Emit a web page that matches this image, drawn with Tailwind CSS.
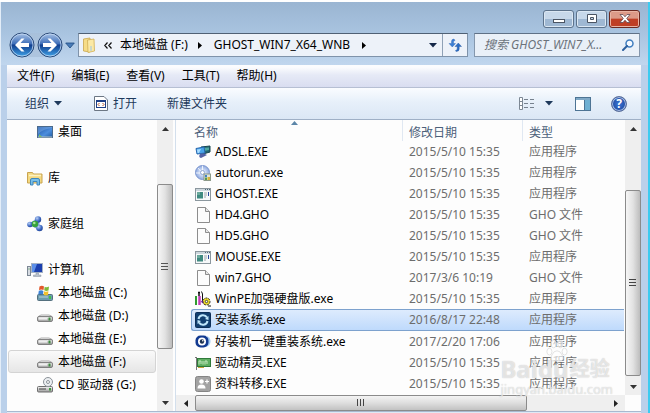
<!DOCTYPE html>
<html lang="zh-CN">
<head>
  <meta charset="UTF-8">
  <meta name="viewport" content="width=device-width, initial-scale=1">
  <title>GHOST_WIN7_X64_WNB</title>
  <script src="https://cdn.jsdelivr.net/npm/@tailwindcss/browser@4"></script>
</head>
<body class="h-screen overflow-hidden bg-white pt-[2px] font-['Noto_Sans','Noto_Sans_CJK_SC',sans-serif] text-xs leading-4 text-black">

  <!-- Shared icons -->
  <svg class="absolute h-0 w-0">
    <defs>
      <linearGradient id="orb" x1="0" y1="0" x2="0" y2="1">
        <stop offset="0" stop-color="#a9c3e6"/><stop offset=".45" stop-color="#3f6fb9"/>
        <stop offset=".5" stop-color="#123f8e"/><stop offset="1" stop-color="#3fa5ea"/>
      </linearGradient>
      <linearGradient id="screen" x1="0" y1="0" x2="1" y2="1">
        <stop offset="0" stop-color="#1c4f9e"/><stop offset=".6" stop-color="#4c8ede"/><stop offset="1" stop-color="#205a9e"/>
      </linearGradient>
      <radialGradient id="ball" cx=".35" cy=".3" r=".8">
        <stop offset="0" stop-color="#b8d0f6"/><stop offset=".6" stop-color="#3b66c0"/><stop offset="1" stop-color="#1d3d8c"/>
      </radialGradient>
      <linearGradient id="metal" x1="0" y1="0" x2="0" y2="1">
        <stop offset="0" stop-color="#f4f4f4"/><stop offset="1" stop-color="#9a9a9a"/>
      </linearGradient>
      <radialGradient id="disc">
        <stop offset="0" stop-color="#ffffff"/><stop offset=".5" stop-color="#c3d3f2"/><stop offset="1" stop-color="#8ea9de"/>
      </radialGradient>
    </defs>
    <symbol id="drive" viewBox="0 0 16 16">
      <path d="M1 9.500Q1 8 4 7H12Q15.500 8 15.500 9.500Z" fill="#f3f3f3" stroke="#9a9a9a" stroke-width=".8"/>
      <rect x=".5" y="8.500" width="15" height="5" rx="1.500" fill="url(#metal)" stroke="#777" stroke-width=".9"/>
      <rect x="2" y="10" width="8" height="1.500" fill="#eee"/>
      <rect x="11.500" y="9.500" width="2" height="3" fill="#3c8a3f"/>
    </symbol>
    <symbol id="program" viewBox="0 0 16 16">
      <rect x=".5" y="2.500" width="15" height="12" fill="#f7f9fa" stroke="#8b979e"/>
      <path d="M1 4H15" stroke="#cdd7dd" stroke-width="2"/>
      <path d="M10 3.500H11M12 3.500H13M14 3.500H15" stroke="#506a7a"/>
      <rect x="2" y="6" width="6" height="6.500" fill="#3f8a80"/>
      <rect x="2" y="6" width="3" height="3" fill="#6ba99c"/>
      <path d="M9 7H12M9 9H12M9 11H11" stroke="#9aa5ab"/>
      <path d="M13.500 6V10" stroke="#26489a"/>
    </symbol>
    <symbol id="page" viewBox="0 0 16 16">
      <path d="M2.500 .5H10.500L14.500 4.500V15.500H2.500Z" fill="#fcfcfc" stroke="#8d8d8d"/>
      <path d="M10.500 .5V4.500H14.500" fill="#e6e6e6" stroke="#8d8d8d"/>
    </symbol>
    <symbol id="down" viewBox="0 0 8 5"><path d="M0 0H8L4 4.500Z" fill="currentColor"/></symbol>
  </svg>

  <div class="flex h-full">
    <div class="flex min-w-0 flex-1 flex-col border-l border-[#e3edf8] bg-[#bad0ea] pl-[6px]">

      <!-- Title bar and address bar -->
      <header class="-ml-[6px] bg-linear-to-b from-[#9ab5d2] via-[#a9c4e0] to-[#c0d6ee] pl-[6px]">
        <div class="flex justify-end gap-[2px] pt-2 pr-2">
          <button aria-label="最小化" class="flex h-[18px] w-[31px] items-center justify-center rounded-[3px] border border-[#5d738c] bg-linear-to-b from-[#c7d8ea] from-50% to-[#9fb8d3] to-50% shadow-[inset_0_0_0_1px_#dbe7f3]">
            <svg class="h-3 w-3" viewBox="0 0 12 12"><rect x=".5" y="6.500" width="11" height="3" fill="#fff" stroke="#4a5463"/></svg>
          </button>
          <button aria-label="最大化" class="flex h-[18px] w-[31px] items-center justify-center rounded-[3px] border border-[#5d738c] bg-linear-to-b from-[#c7d8ea] from-50% to-[#9fb8d3] to-50% shadow-[inset_0_0_0_1px_#dbe7f3]">
            <svg class="h-3 w-3" viewBox="0 0 12 12"><path d="M1.500 1.500H10.500V9.500H1.500ZM4.500 4.500V6.500H7.500V4.500Z" fill="#fff" fill-rule="evenodd" stroke="#4a5463"/></svg>
          </button>
          <button aria-label="关闭" class="flex h-[18px] w-[31px] items-center justify-center rounded-[3px] border border-[#6b2a22] bg-linear-to-b from-[#dc9a88] from-45% to-[#bf3f25] to-50% shadow-[inset_0_0_0_1px_#e8b4a4]">
            <svg class="h-3 w-3" viewBox="0 0 12 12"><path d="M1 1.500H4L6 3.800L8 1.500H11L7.700 5.500L11 9.500H8L6 7.200L4 9.500H1L4.300 5.500Z" fill="#fff" stroke="#5c4a54" stroke-width=".8"/></svg>
          </button>
        </div>

        <div class="flex items-center pt-[5px] pr-2 pb-2 pl-[2px]">
          <div class="flex h-6 items-center rounded-full bg-[#a8bfd8]/70">
            <button aria-label="后退"><svg class="h-[26px] w-[26px]" viewBox="0 0 26 26"><circle cx="13" cy="13" r="12" fill="url(#orb)" stroke="#2b4a78"/><circle cx="13" cy="13" r="11" fill="none" stroke="#c4d9f2" stroke-width=".8"/><path d="M6 13L12.500 6.500H15.500L11.500 11H20V15H11.500L15.500 19.500H12.500Z" fill="#fff"/></svg></button>
            <button aria-label="前进" class="ml-[2px]"><svg class="h-[26px] w-[26px]" viewBox="0 0 26 26"><circle cx="13" cy="13" r="12" fill="url(#orb)" stroke="#2b4a78"/><circle cx="13" cy="13" r="11" fill="none" stroke="#c4d9f2" stroke-width=".8"/><path d="M20 13L13.500 6.500H10.500L14.500 11H6V15H14.500L10.500 19.500H13.500Z" fill="#fff"/></svg></button>
          </div>
          <button aria-label="最近浏览的位置" class="mr-[3px] ml-[2px]"><svg class="h-[7px] w-[10px]" viewBox="0 0 10 7"><path d="M.7 1H9.300L5 6Z" fill="#4a7cb8" stroke="#1d4a80" stroke-width=".8"/></svg></button>

          <div class="flex h-6 min-w-0 flex-1 items-center border border-[#7f93aa] border-t-[#4f6074] bg-[#edf2f9] pl-1">
            <svg class="h-4 w-3 shrink-0" viewBox="0 0 12 16"><path d="M.5 2L7 1V15L.5 14Z" fill="#f6dc86" stroke="#c9a64e" stroke-width=".8"/><path d="M4.500 3L11 2L11.500 14L5 15.500Z" fill="#fbe9a5" stroke="#d0ae55" stroke-width=".8"/><path d="M8 9V14" stroke="#9cc8e8"/></svg>
            <svg class="mr-2 ml-[9px] h-[7px] w-2 shrink-0" viewBox="0 0 8 7"><path d="M3.500 .5L.8 3.500L3.500 6.500M7.500 .5L4.800 3.500L7.500 6.500" fill="none" stroke="#111" stroke-width="1.200"/></svg>
            <a href="#" class="whitespace-nowrap">本地磁盘 (F:)</a>
            <svg class="mr-3 ml-[10px] h-[7px] w-1 shrink-0" viewBox="0 0 4 7"><path d="M0 0V7L4 3.500Z"/></svg>
            <a href="#" class="whitespace-nowrap">GHOST_WIN7_X64_WNB</a>
            <svg class="ml-3 h-[7px] w-1 shrink-0" viewBox="0 0 4 7"><path d="M0 0V7L4 3.500Z"/></svg>
            <button aria-label="历史记录" class="mr-[5px] ml-auto text-[#152848]"><svg class="h-[5px] w-2"><use href="#down"/></svg></button>
            <button aria-label="刷新" class="flex h-full w-[25px] items-center justify-center border-l border-[#8fa1b6]">
              <svg class="h-[14px] w-[14px]" viewBox="0 0 14 14"><path d="M6 1Q3.500 1 3.500 3.500V5.500H1L4.300 9L7.500 5.500H5.500V3.500Q5.500 3 7 2.500Z" fill="#3b7fd4" stroke="#2860b0" stroke-width=".4"/><path d="M8 13.500Q11.200 13.500 11.200 11V8.500H13.500L10.300 5L7 8.500H9.200V11Q9.200 12 7.500 12.500Z" fill="#2a6cc4" stroke="#1f549c" stroke-width=".4"/></svg>
            </button>
          </div>

          <div class="ml-[6px] flex h-6 w-[166px] items-center border border-[#8497ad] border-t-[#5f7186] bg-[#e9f0f8] pr-[5px] pl-[9px]">
            <input type="text" aria-label="搜索" placeholder="搜索 GHOST_WIN7_X..." class="w-full min-w-0 flex-1 bg-transparent italic outline-none placeholder:text-[#6c737c]">
            <svg class="h-3 w-3 shrink-0" viewBox="0 0 12 12"><circle cx="7.500" cy="4.500" r="3.500" fill="#f4f9ff" stroke="#3f7dbf" stroke-width="1.500"/><path d="M5 7L1 11" stroke="#2c5f9e" stroke-width="2" stroke-linecap="round"/></svg>
          </div>
        </div>
      </header>

      <div class="mr-[7px] flex min-h-0 flex-1 flex-col">
        <!-- Menu -->
        <nav class="flex h-[23px] shrink-0 items-center gap-[17px] border-b border-[#b6bfd3] bg-linear-to-b from-[#fbfcfe] from-10% via-[#e6eaf6] via-45% to-[#d9ddf0] pl-[10px] whitespace-nowrap">
          <button>文件(F)</button>
          <button>编辑(E)</button>
          <button>查看(V)</button>
          <button>工具(T)</button>
          <button>帮助(H)</button>
        </nav>

        <!-- Toolbar -->
        <div class="flex h-8 shrink-0 items-center border-b border-[#9fb0c6] bg-linear-to-b from-[#fafcff] via-[#e7f0fa] via-45% to-[#dbe7f5] pr-[14px] pl-[18px] whitespace-nowrap text-[#1e395b]">
          <button class="flex items-center gap-[5px]">组织 <svg class="h-[5px] w-2"><use href="#down"/></svg></button>
          <button class="ml-8 flex items-center gap-[5px]">
            <svg class="h-[15px] w-[14px]" viewBox="0 0 14 15"><path d="M.5 .5H10L13.500 4V14.500H.5Z" fill="#fff" stroke="#6c7784"/><rect x="2.500" y="4.500" width="9" height="7" fill="#fff" stroke="#1e3f86"/><path d="M2 5H12" stroke="#1e3f86" stroke-width="2"/><path d="M5.500 7L4 8.500L5.500 10M8.500 7L10 8.500L8.500 10" fill="none" stroke="#b0562c"/></svg>
            打开
          </button>
          <button class="ml-[30px]">新建文件夹</button>
          <button aria-label="更改视图" class="ml-auto flex items-center gap-[10px]">
            <svg class="h-[13px] w-4" viewBox="0 0 16 13"><path d="M.5 .5H3.500V12.500H.5ZM.5 4.500H3.500M.5 8.500H3.500" fill="#fff" stroke="#7d8894"/><path d="M5 2.500H9M11 2.500H15M5 6.500H9M11 6.500H15M5 10.500H9M11 10.500H15" stroke="#77828f"/></svg>
            <svg class="h-[5px] w-2"><use href="#down"/></svg>
          </button>
          <button aria-label="显示预览窗格" class="ml-[22px]"><svg class="h-[14px] w-4" viewBox="0 0 16 14"><rect x=".5" y=".5" width="15" height="13" fill="#fdfefe" stroke="#4d7494"/><path d="M1 2H15" stroke="#7fa8c6" stroke-width="2"/><rect x="10" y="3" width="5" height="10" fill="#6fb0d2"/><path d="M9.500 3V13" stroke="#4d7494"/></svg></button>
          <button aria-label="帮助" class="ml-5 flex h-4 w-4 items-center justify-center rounded-full border border-[#5b6f9a] bg-radial from-[#3d78d8] to-[#173a8c] font-bold text-white shadow-[inset_0_0_0_1px_#a9bfe6]">?</button>
        </div>

        <div class="flex min-h-0 flex-1 bg-[#fdfdfd]">
          <!-- Navigation tree -->
          <aside class="flex w-[169px] shrink-0 border-r border-[#d3dfec] pr-[2px]">
            <nav class="flex min-w-0 flex-1 flex-col overflow-hidden whitespace-nowrap">
              <a href="#" class="flex h-[23px] shrink-0 items-center gap-[5px] pl-[30px]">
                <svg class="h-4 w-4" viewBox="0 0 16 16"><rect x=".5" y="2.500" width="15" height="11" fill="url(#screen)" stroke="#4b6a8c"/><path d="M1 10Q6 5 15 4V3H1Z" fill="#8dbcf0" opacity=".4"/><path d="M1 13H15" stroke="#b4c2c6"/><path d="M2 10L5 13H2Z" fill="#7bbf68"/></svg>桌面</a>
              <a href="#" class="mt-[23px] flex h-[23px] shrink-0 items-center gap-[5px] pl-5">
                <svg class="h-4 w-4" viewBox="0 0 16 16"><path d="M.5 13V2.500H5.500L6.500 4H15V13Z" fill="#f3d981" stroke="#c9a450"/><path d="M2 5.500H14" stroke="#fff3c0" stroke-width="1.500"/><path d="M3.500 15V10Q3.500 8.500 5 8.500H11Q12.500 8.500 12.500 10V15H10V11.500H6V15Z" fill="#78bfe8" stroke="#3f87bd"/></svg>库</a>
              <a href="#" class="mt-[23px] flex h-[23px] shrink-0 items-center gap-[5px] pl-5">
                <svg class="h-4 w-4" viewBox="0 0 16 16"><path d="M3 8L11 3L12 13Z" fill="none" stroke="#82a8d8" stroke-width="2"/><circle cx="3" cy="8.500" r="2.800" fill="url(#ball)"/><circle cx="11" cy="3.500" r="3.200" fill="url(#ball)"/><circle cx="12.500" cy="12" r="3.300" fill="url(#ball)"/><circle cx="8" cy="8" r="3.200" fill="#35a33b"/><circle cx="7.300" cy="7" r="1.300" fill="#a9e39a"/></svg>家庭组</a>
              <a href="#" class="mt-[23px] flex h-[23px] shrink-0 items-center gap-[5px] pl-5">
                <svg class="h-4 w-4" viewBox="0 0 16 16"><rect x=".5" y="4.500" width="3" height="9" fill="#d6dbe2" stroke="#7c8794"/><path d="M1.500 7H2.500" stroke="#3a8a3a"/><rect x="4.500" y="1.500" width="11" height="9" fill="#1b3fae" stroke="#a5b2c4"/><path d="M5 2H10L7 10H5Z" fill="#5b8ee8"/><path d="M9 11H11.500V13H14V14.500H6.500V13H9Z" fill="#b9c2cd" stroke="#8791a0" stroke-width=".5"/></svg>计算机</a>
              <a href="#" class="flex h-[23px] shrink-0 items-center gap-[5px] pl-[30px]">
                <svg class="h-4 w-4" viewBox="0 0 16 16"><rect x=".5" y="9.500" width="15" height="6" rx="1" fill="#6b9cae" stroke="#54707e"/><path d="M2 12H11" stroke="#b9d4de"/><rect x="12" y="11" width="2" height="3" fill="#3fc24a"/><path d="M2.500 1.500Q5 0 7 1.500L6.500 5Q4.500 4 2 5Z" fill="#e2572a"/><path d="M7.700 1.800Q10 3 12 1.500L11.500 5.500Q9 6.500 7.200 5.300Z" fill="#7db83a"/><path d="M1.800 5.800Q4.500 4.700 6.400 6L6 9.500Q3.500 8.500 1.200 9.700Z" fill="#3c82d6"/><path d="M7.100 6.200Q9 7.300 11.400 6.300L11 10Q8.500 11 6.600 9.800Z" fill="#f4c12c"/></svg>本地磁盘 (C:)</a>
              <a href="#" class="flex h-[23px] shrink-0 items-center gap-[5px] pl-[30px]"><svg class="h-4 w-4"><use href="#drive"/></svg>本地磁盘 (D:)</a>
              <a href="#" class="flex h-[23px] shrink-0 items-center gap-[5px] pl-[30px]"><svg class="h-4 w-4"><use href="#drive"/></svg>本地磁盘 (E:)</a>
              <a href="#" class="mx-px flex h-[23px] shrink-0 items-center gap-[5px] rounded-[3px] border border-[#d4d4d4] bg-linear-to-b from-[#fafafa] to-[#e6e6e6] pl-7"><svg class="h-4 w-4"><use href="#drive"/></svg>本地磁盘 (F:)</a>
              <a href="#" class="flex h-[23px] shrink-0 items-center gap-[5px] pl-[30px]">
                <svg class="h-4 w-4" viewBox="0 0 16 16"><rect x=".5" y="9.500" width="15" height="5.500" rx="1" fill="url(#metal)" stroke="#6f6f6f"/><path d="M2 12H9" stroke="#444"/><rect x="12" y="11" width="2" height="2.500" fill="#3c9a3f"/><circle cx="11" cy="5" r="4.500" fill="#eceff2" stroke="#8b9298"/><circle cx="11" cy="5" r="1.500" fill="#fff" stroke="#8b9298"/></svg>CD 驱动器 (G:)</a>
            </nav>
            <div class="flex w-4 shrink-0 flex-col bg-[#efefef]">
              <button aria-label="向上滚动" class="flex h-[17px] items-center justify-center"><svg class="h-1 w-[7px]" viewBox="0 0 7 4"><path d="M0 4H7L3.500 0Z" fill="#333"/></svg></button>
              <div class="flex-[47]"></div>
              <div class="flex flex-[165] items-center justify-center rounded-[2px] border border-[#8b8b8b] bg-linear-to-r from-[#f6f6f6] via-[#e2e2e2] to-[#bdbdbd]">
                <svg class="h-2 w-2" viewBox="0 0 8 8"><path d="M0 .5H7M0 3.500H7M0 6.500H7" stroke="#555"/></svg>
              </div>
              <div class="flex-[45]"></div>
              <button aria-label="向下滚动" class="flex h-[17px] items-center justify-center"><svg class="h-1 w-[7px]" viewBox="0 0 7 4"><path d="M0 0H7L3.500 4Z" fill="#333"/></svg></button>
            </div>
          </aside>

          <!-- File list -->
          <main class="relative flex min-w-0 flex-1 flex-col">
            <div class="flex min-h-0 flex-1">
              <div class="min-w-0 flex-1 overflow-hidden pl-[15px]">
                <table class="w-full table-fixed border-separate border-spacing-0 text-left whitespace-nowrap">
                  <colgroup><col class="w-[212px]"><col class="w-[120px]"><col></colgroup>
                  <thead class="text-[#4c607a]">
                    <tr class="h-[21px]">
                      <th class="relative border-r border-[#e0e8f2] p-0 pt-1 pl-[3px] font-normal">名称
                        <svg class="absolute top-px left-[100px] h-1 w-[7px]" viewBox="0 0 7 4"><path d="M0 4H7L3.500 0Z" fill="#5c86a8"/></svg>
                      </th>
                      <th class="border-r border-[#e0e8f2] p-0 pt-1 pl-[6px] font-normal">修改日期</th>
                      <th class="p-0 pt-1 pl-[6px] font-normal">类型</th>
                    </tr>
                  </thead>
                  <tbody class="text-[#6d6d6d]">
                    <tr class="h-[21px]">
                      <td class="p-0 pl-1 text-black"><div class="flex items-center gap-1"><svg class="h-4 w-4" viewBox="0 0 16 16"><path d="M6 3L15 2V8L8 10Z" fill="#23656f" stroke="#174750"/><path d="M8 4L14 3.500V6L9 7Z" fill="#4fa9a0"/><path d="M1 4.500L9 3L10 9L2 10Z" fill="#4aa5ea" stroke="#2867ae"/><path d="M2 5.500L6 5L4 9H2.500Z" fill="#a9dcff"/><path d="M5 10L9 9.500L12 11L6 14Q3 13 5 10Z" fill="#5361a4"/></svg>ADSL.EXE</div></td>
                      <td class="p-0 pl-[6px]">2015/5/10 15:35</td><td class="p-0 pl-[6px]">应用程序</td>
                    </tr>
                    <tr class="h-[21px]">
                      <td class="p-0 pl-1 text-black"><div class="flex items-center gap-1"><svg class="h-4 w-4" viewBox="0 0 16 16"><circle cx="7.500" cy="7.500" r="7" fill="url(#disc)" stroke="#7d97cf"/><path d="M7.500 .8V6M1 8H6M3 3L6 6.500" stroke="#fff" opacity=".8"/><circle cx="7.500" cy="7.500" r="2" fill="#fff" stroke="#8ea4d4"/><rect x="9" y="9" width="6.500" height="6.500" fill="#dfe6dc" stroke="#8d9a8a"/><path d="M10 10H12V12H10Z" fill="#3f80c8"/><path d="M12.500 12H15V15H12.500Z" fill="#d7b43b"/><path d="M10 12.500H12V15H10Z" fill="#5a9a4a"/></svg>autorun.exe</div></td>
                      <td class="p-0 pl-[6px]">2015/5/10 15:35</td><td class="p-0 pl-[6px]">应用程序</td>
                    </tr>
                    <tr class="h-[21px]">
                      <td class="p-0 pl-1 text-black"><div class="flex items-center gap-1"><svg class="h-4 w-4"><use href="#program"/></svg>GHOST.EXE</div></td>
                      <td class="p-0 pl-[6px]">2015/5/10 15:35</td><td class="p-0 pl-[6px]">应用程序</td>
                    </tr>
                    <tr class="h-[21px]">
                      <td class="p-0 pl-1 text-black"><div class="flex items-center gap-1"><svg class="h-4 w-4"><use href="#page"/></svg>HD4.GHO</div></td>
                      <td class="p-0 pl-[6px]">2015/5/10 15:35</td><td class="p-0 pl-[6px]">GHO 文件</td>
                    </tr>
                    <tr class="h-[21px]">
                      <td class="p-0 pl-1 text-black"><div class="flex items-center gap-1"><svg class="h-4 w-4"><use href="#page"/></svg>HD5.GHO</div></td>
                      <td class="p-0 pl-[6px]">2015/5/10 15:35</td><td class="p-0 pl-[6px]">GHO 文件</td>
                    </tr>
                    <tr class="h-[21px]">
                      <td class="p-0 pl-1 text-black"><div class="flex items-center gap-1"><svg class="h-4 w-4"><use href="#program"/></svg>MOUSE.EXE</div></td>
                      <td class="p-0 pl-[6px]">2015/5/10 15:35</td><td class="p-0 pl-[6px]">应用程序</td>
                    </tr>
                    <tr class="h-[21px]">
                      <td class="p-0 pl-1 text-black"><div class="flex items-center gap-1"><svg class="h-4 w-4"><use href="#page"/></svg>win7.GHO</div></td>
                      <td class="p-0 pl-[6px]">2017/3/6 10:19</td><td class="p-0 pl-[6px]">GHO 文件</td>
                    </tr>
                    <tr class="h-[21px]">
                      <td class="p-0 pl-1 text-black"><div class="flex items-center gap-1"><svg class="h-4 w-4" viewBox="0 0 16 16"><path d="M1 5V14" stroke="#2f9c2f" stroke-width="2"/><path d="M3 1.500H5M4 2V5" stroke="#111" stroke-width="1.500"/><path d="M4.500 5V14" stroke="#c23bb8" stroke-width="2.500"/><path d="M6.500 .5L7.500 3V10" stroke="#111" fill="none"/><path d="M6.500 10L10 13" stroke="#7a2fb0" stroke-width="2"/><circle cx="11.500" cy="10.500" r="3.500" fill="#f1df2c" stroke="#222" stroke-dasharray="2 1"/><circle cx="11.500" cy="10.500" r="1.200" fill="#fff" stroke="#222" stroke-width=".8"/><path d="M13 15H16" stroke="#111"/></svg>WinPE加强硬盘版.exe</div></td>
                      <td class="p-0 pl-[6px]">2015/5/10 15:35</td><td class="p-0 pl-[6px]">应用程序</td>
                    </tr>
                    <tr class="h-[22px] bg-linear-to-b from-[#dfecfd] to-[#bdd9fc]">
                      <td class="rounded-l-[3px] border-y border-l border-[#7da2ce] p-0 pl-[3px] text-black"><div class="flex items-center gap-1"><svg class="h-4 w-4" viewBox="0 0 16 16"><rect x=".5" y=".5" width="15" height="15" rx="1" fill="#123f70" stroke="#0d2f58"/><path d="M3.500 7A4.600 4.600 0 0 1 12 5.500M12.500 9A4.600 4.600 0 0 1 4 10.500" fill="none" stroke="#bfe6fa" stroke-width="2"/><path d="M13.500 4V8L10 7ZM2.500 12V8L6 9Z" fill="#bfe6fa"/></svg>安装系统.exe</div></td>
                      <td class="border-y border-[#7da2ce] p-0 pl-[6px]">2016/8/17 22:48</td><td class="border-y border-[#7da2ce] p-0 pl-[6px]">应用程序</td>
                    </tr>
                    <tr class="h-[21px]">
                      <td class="p-0 pl-1 text-black"><div class="flex items-center gap-1"><svg class="h-4 w-4" viewBox="0 0 16 16"><path d="M12 2Q16 4 15.500 8Q15 12 11 13Z" fill="#a9d0f4"/><rect x=".5" y="1.500" width="13" height="12" rx="5" fill="#123a90"/><circle cx="7" cy="7.500" r="4" fill="#fff"/><circle cx="7" cy="7.500" r="2.200" fill="#1b3050"/><circle cx="7.800" cy="6.700" r=".8" fill="#fff"/></svg>好装机一键重装系统.exe</div></td>
                      <td class="p-0 pl-[6px]">2017/2/20 17:06</td><td class="p-0 pl-[6px]">应用程序</td>
                    </tr>
                    <tr class="h-[21px]">
                      <td class="p-0 pl-1 text-black"><div class="flex items-center gap-1"><svg class="h-4 w-4" viewBox="0 0 16 16"><path d="M1.500 2V15M0 2.500H2" stroke="#777" /><rect x="2.500" y="3.500" width="13" height="8" fill="#5fae62" stroke="#2f7a3a"/><path d="M4 9.500V6H6V9M8 9.500V6M10 9.500V6H12V9" fill="none" stroke="#c5e8bf"/><path d="M3 12.500H9" stroke="#c8a43a"/></svg>驱动精灵.EXE</div></td>
                      <td class="p-0 pl-[6px]">2015/5/10 15:35</td><td class="p-0 pl-[6px]">应用程序</td>
                    </tr>
                    <tr class="h-[21px]">
                      <td class="p-0 pl-1 text-black"><div class="flex items-center gap-1"><svg class="h-4 w-4" viewBox="0 0 16 16"><rect x=".5" y=".5" width="15" height="15" rx="2" fill="#a3a3a3" stroke="#858585"/><circle cx="6.500" cy="5.500" r="2.300" fill="#fff"/><path d="M2.500 12.500Q2.500 8.500 6.500 8.500Q10.500 8.500 10.500 12.500Z" fill="#fff"/><path d="M10 5.500H14M12 3.500V7.500" stroke="#fff" stroke-width="1.200"/></svg>资料转移.EXE</div></td>
                      <td class="p-0 pl-[6px]">2015/5/10 15:35</td><td class="p-0 pl-[6px]">应用程序</td>
                    </tr>
                  </tbody>
                </table>
              </div>
              <div class="ml-px flex w-4 shrink-0 flex-col bg-[#efefef]">
                <button aria-label="向上滚动" class="flex h-[17px] items-center justify-center"><svg class="h-1 w-[7px]" viewBox="0 0 7 4"><path d="M0 4H7L3.500 0Z" fill="#333"/></svg></button>
                <div class="flex-[53]"></div>
                <div class="flex flex-[186] items-center justify-center rounded-[2px] border border-[#8b8b8b] bg-linear-to-r from-[#f6f6f6] via-[#e2e2e2] to-[#bdbdbd]">
                  <svg class="h-2 w-2" viewBox="0 0 8 8"><path d="M0 .5H7M0 3.500H7M0 6.500H7" stroke="#444"/></svg>
                </div>
                <div class="flex-[2]"></div>
                <button aria-label="向下滚动" class="flex h-[17px] items-center justify-center"><svg class="h-1 w-[7px]" viewBox="0 0 7 4"><path d="M0 0H7L3.500 4Z" fill="#333"/></svg></button>
              </div>
            </div>
            <div class="mr-4 flex h-4 shrink-0 bg-[#efefef]">
              <button aria-label="向左滚动" class="flex w-[19px] items-center justify-center"><svg class="h-[7px] w-1" viewBox="0 0 4 7"><path d="M4 0V7L0 3.500Z" fill="#222"/></svg></button>
              <div class="flex flex-[332] items-center justify-center rounded-[2px] border border-[#8b8b8b] bg-linear-to-b from-[#f4f4f4] via-[#dedede] to-[#c2c2c2]">
                <svg class="h-2 w-2" viewBox="0 0 8 8"><path d="M.5 0V7M3.500 0V7M6.500 0V7" stroke="#444"/></svg>
              </div>
              <div class="flex-[80]"></div>
              <button aria-label="向右滚动" class="flex w-[19px] items-center justify-center"><svg class="h-[7px] w-1" viewBox="0 0 4 7"><path d="M0 0V7L4 3.500Z" fill="#222"/></svg></button>
            </div>

            <!-- Watermark -->
            <div class="pointer-events-none absolute right-[28px] bottom-[14px] text-white/60">
              <svg class="absolute -top-[18px] left-[46px] h-8 w-[22px]" viewBox="0 0 26 38" fill="#fff" fill-opacity=".6" stroke="#dedede"><ellipse cx="4" cy="15" rx="3" ry="4"/><ellipse cx="9" cy="6" rx="3" ry="4.500"/><ellipse cx="17" cy="6" rx="3" ry="4.500"/><ellipse cx="22" cy="15" rx="3" ry="4"/><path d="M13 14Q17 14 19 19Q22 24 18 26H8Q4 24 7 19Q9 14 13 14Z"/></svg>
              <div class="flex items-center gap-px leading-6 font-bold [text-shadow:0_0_1px_#bbb]"><span class="text-2xl leading-6">Baidu</span><span class="text-xl leading-6">经验</span></div>
              <div class="text-[13px] leading-4 [text-shadow:0_0_1px_#bbb]">jingyan.baidu.com</div>
            </div>
          </main>
        </div>
        <div class="h-[2px] shrink-0 border-t border-[#a8b9cf] bg-[#dfe9f5]"></div>
      </div>
    </div>
    <div class="w-[2px] shrink-0 bg-[#3ccbf0]"></div>
  </div>

</body>
</html>
